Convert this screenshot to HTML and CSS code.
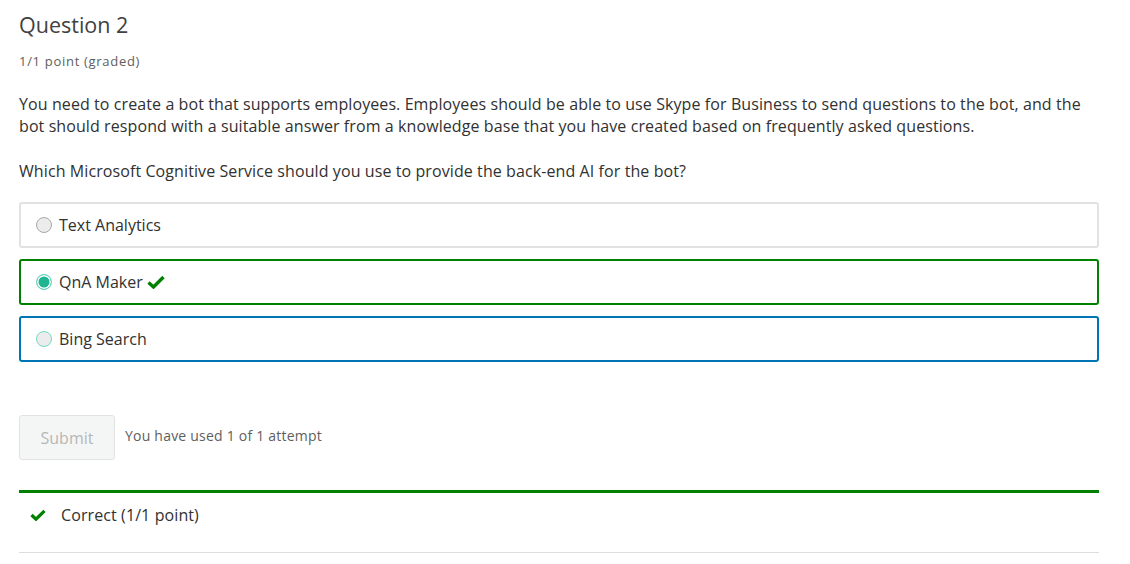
FILE: index.html
```html
<!DOCTYPE html>
<html>
<head>
<meta charset="utf-8">
<link rel="stylesheet" href="styles.css">
</head>
<body>
<div class="problem">
  <h3 class="title">Question 2</h3>
  <div class="points">1/1 point (graded)</div>
  <p class="text">You need to create a bot that supports employees. Employees should be able to use Skype for Business to send questions to the bot, and the bot should respond with a suitable answer from a knowledge base that you have created based on frequently asked questions.</p>
  <p class="text ask">Which Microsoft Cognitive Service should you use to provide the back-end AI for the bot?</p>
  <div class="choices">
    <label class="choice">
      <span class="radio"></span>
      <span class="label">Text Analytics</span>
    </label>
    <label class="choice correct">
      <span class="radio checked"></span>
      <span class="label">QnA Maker</span>
      <svg class="check" width="18" height="14" viewBox="0 0 18 14"><path d="M1.5 7.5 L6.5 12 L16.5 2" fill="none" stroke="#008100" stroke-width="3.4"/></svg>
    </label>
    <label class="choice focus">
      <span class="radio focused"></span>
      <span class="label">Bing Search</span>
    </label>
  </div>
  <div class="actions">
    <button class="submit" disabled>Submit</button>
    <span class="attempts">You have used 1 of 1 attempt</span>
  </div>
  <div class="notification">
    <svg class="ncheck" width="16" height="12" viewBox="0 0 16 12"><path d="M1.5 6 L6 10.2 L14.5 1.8" fill="none" stroke="#008100" stroke-width="3.2"/></svg>
    <span class="nmsg">Correct (1/1 point)</span>
  </div>
</div>
</body>
</html>
```
FILE: styles.css
```css
html, body {
  margin: 0;
  padding: 0;
  background: #fff;
}
body {
  font-family: "Open Sans", "Liberation Sans", sans-serif;
  color: #313131;
}
.problem {
  padding: 9px 31px 0 19px;
}
.title {
  margin: 0;
  font-size: 21.5px;
  font-weight: 400;
  line-height: 32px;
  color: #414141;
}
.points {
  margin-top: 11px;
  font-size: 13px;
  letter-spacing: 0.7px;
  line-height: 18px;
  color: #5e5e5e;
}
.text {
  margin: 23px 0 0;
  font-size: 16px;
  letter-spacing: 0.09px;
  line-height: 22px;
  color: #313131;
}
.text.ask {
  margin-top: 23px;
}
.choices {
  margin-top: 20px;
  display: flex;
  flex-direction: column;
  gap: 11px;
}
.choice {
  display: flex;
  align-items: center;
  height: 46px;
  box-sizing: border-box;
  border: 2px solid #e2e2e2;
  border-radius: 3px;
  padding-left: 15px;
  font-size: 16px;
  color: #313131;
}
.choice.correct {
  border-color: #008100;
}
.choice.focus {
  border-color: #0075b4;
}
.radio {
  width: 16px;
  height: 16px;
  box-sizing: border-box;
  border-radius: 50%;
  border: 1.5px solid #a8a8a8;
  background: #ececec;
  margin-right: 7px;
  flex: none;
}
.radio.checked {
  border: 1.5px solid #6cd7c0;
  background: #1fb590;
  box-shadow: inset 0 0 0 1.5px #fff;
}
.radio.focused {
  border: 1.5px solid #6ddbc3;
  background: #ececec;
}
.check {
  margin-left: 4px;
}
.actions {
  margin-top: 53px;
  display: flex;
  align-items: center;
}
.submit {
  width: 96px;
  height: 45px;
  border: 1px solid #e2e2e2;
  border-radius: 3px;
  background: #f4f6f6;
  color: #b7b7b7;
  font-family: "Open Sans", "Liberation Sans", sans-serif;
  font-size: 16px;
  padding: 0;
}
.attempts {
  margin-left: 10px;
  font-size: 14px;
  letter-spacing: 0.22px;
  color: #5e5e5e;
  margin-top: -4px;
}
.notification {
  margin-top: 30px;
  border-top: 3px solid #008100;
  border-bottom: 1px solid #dddddd;
  height: 63px;
  box-sizing: border-box;
  display: flex;
  align-items: flex-start;
  padding: 11px 0 0 11px;
}
.ncheck {
  margin: 5px 15px 0 0;
}
.nmsg {
  font-size: 16px;
  line-height: 22px;
  letter-spacing: 0.1px;
  color: #313131;
}
```
